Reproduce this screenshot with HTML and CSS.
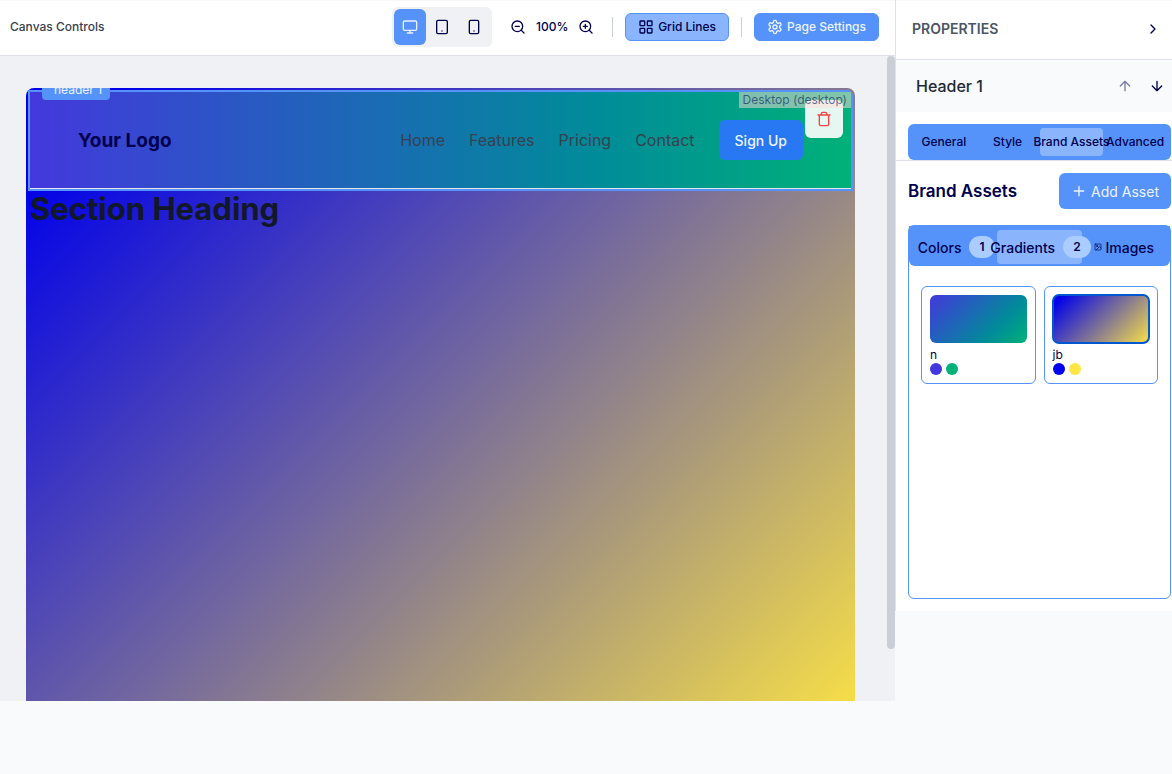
FILE: index.html
```html
<!DOCTYPE html>
<html lang="en">
<head>
<meta charset="utf-8">
<title>Page Builder</title>
<meta name="viewport" content="width=device-width, initial-scale=1">
<link rel="stylesheet" href="styles.css">
</head>
<body>
<div class="app">
  <main class="workspace">
    <header class="toolbar">
      <span class="toolbar-title">Canvas Controls</span>
      <div class="toolbar-controls">
        <div class="devices">
          <button class="device active" aria-label="Desktop"><svg class="icon" viewBox="0 0 24 24"><rect x="2" y="3" width="20" height="14" rx="2"/><path d="M8 21h8M12 17v4"/></svg></button>
          <button class="device" aria-label="Tablet"><svg class="icon" viewBox="0 0 24 24"><rect x="4" y="2" width="16" height="20" rx="2"/><path d="M12 18h.01"/></svg></button>
          <button class="device" aria-label="Mobile"><svg class="icon" viewBox="0 0 24 24"><rect x="5" y="2" width="14" height="20" rx="2"/><path d="M12 18h.01"/></svg></button>
        </div>
        <div class="zoom">
          <button class="icon-button" aria-label="Zoom out"><svg class="icon" viewBox="0 0 24 24"><circle cx="11" cy="11" r="8"/><path d="m21 21-4.35-4.35M8 11h6"/></svg></button>
          <span class="zoom-value">100%</span>
          <button class="icon-button" aria-label="Zoom in"><svg class="icon" viewBox="0 0 24 24"><circle cx="11" cy="11" r="8"/><path d="m21 21-4.35-4.35M11 8v6M8 11h6"/></svg></button>
        </div>
        <span class="divider"></span>
        <button class="tool-button grid-lines"><svg class="icon" viewBox="0 0 24 24"><rect x="3" y="3" width="7" height="7" rx="1"/><rect x="14" y="3" width="7" height="7" rx="1"/><rect x="14" y="14" width="7" height="7" rx="1"/><rect x="3" y="14" width="7" height="7" rx="1"/></svg>Grid Lines</button>
        <span class="divider"></span>
        <button class="tool-button settings"><svg class="icon" viewBox="0 0 24 24"><path d="M12.22 2h-.44a2 2 0 0 0-2 2v.18a2 2 0 0 1-1 1.73l-.43.25a2 2 0 0 1-2 0l-.15-.08a2 2 0 0 0-2.73.73l-.22.38a2 2 0 0 0 .73 2.73l.15.1a2 2 0 0 1 1 1.72v.51a2 2 0 0 1-1 1.74l-.15.09a2 2 0 0 0-.73 2.73l.22.38a2 2 0 0 0 2.73.73l.15-.08a2 2 0 0 1 2 0l.43.25a2 2 0 0 1 1 1.73V20a2 2 0 0 0 2 2h.44a2 2 0 0 0 2-2v-.18a2 2 0 0 1 1-1.73l.43-.25a2 2 0 0 1 2 0l.15.08a2 2 0 0 0 2.73-.73l.22-.39a2 2 0 0 0-.73-2.73l-.15-.08a2 2 0 0 1-1-1.74v-.5a2 2 0 0 1 1-1.74l.15-.09a2 2 0 0 0 .73-2.73l-.22-.38a2 2 0 0 0-2.73-.73l-.15.08a2 2 0 0 1-2 0l-.43-.25a2 2 0 0 1-1-1.73V4a2 2 0 0 0-2-2z"/><circle cx="12" cy="12" r="3"/></svg>Page Settings</button>
      </div>
    </header>
    <div class="stage">
      <div class="canvas">
        <div class="block">
          <span class="block-tag">header 1</span>
          <div class="site-header">
            <span class="logo">Your Logo</span>
            <nav class="site-nav">
              <a href="#">Home</a>
              <a href="#">Features</a>
              <a href="#">Pricing</a>
              <a href="#">Contact</a>
              <button class="signup">Sign Up</button>
            </nav>
          </div>
          <button class="delete" aria-label="Delete block"><svg class="icon" viewBox="0 0 24 24"><path d="M3 6h18M19 6v14a2 2 0 0 1-2 2H7a2 2 0 0 1-2-2V6M8 6V4a2 2 0 0 1 2-2h4a2 2 0 0 1 2 2v2"/></svg></button>
          <span class="viewport-tag">Desktop (desktop)</span>
        </div>
        <h1 class="section-heading">Section Heading</h1>
      </div>
      <div class="scroll-thumb"></div>
    </div>
  </main>
  <aside class="panel">
    <header class="panel-header">
      <h2 class="panel-title">PROPERTIES</h2>
      <button class="icon-button" aria-label="Collapse panel"><svg class="icon" viewBox="0 0 24 24"><path d="m9 18 6-6-6-6"/></svg></button>
    </header>
    <div class="selection">
      <h3 class="selection-name">Header 1</h3>
      <div class="move">
        <button class="icon-button" disabled aria-label="Move up"><svg class="icon" viewBox="0 0 24 24"><path d="m5 12 7-7 7 7M12 19V5"/></svg></button>
        <button class="icon-button" aria-label="Move down"><svg class="icon" viewBox="0 0 24 24"><path d="M12 5v14M19 12l-7 7-7-7"/></svg></button>
      </div>
    </div>
    <div class="tabs-wrap">
      <div class="tabs">
        <button class="tab">General</button>
        <button class="tab">Style</button>
        <button class="tab active">Brand Assets</button>
        <button class="tab">Advanced</button>
      </div>
    </div>
    <section class="assets">
      <div class="assets-head">
        <h3 class="assets-title">Brand Assets</h3>
        <button class="add"><svg class="icon" viewBox="0 0 24 24"><path d="M5 12h14M12 5v14"/></svg>Add Asset</button>
      </div>
      <div class="library">
        <div class="kinds">
          <button class="kind counted">Colors<span class="count">1</span></button>
          <button class="kind counted active">Gradients<span class="count">2</span></button>
          <button class="kind"><svg class="icon mini" viewBox="0 0 24 24"><rect x="3" y="3" width="18" height="18" rx="2"/><circle cx="9" cy="9" r="2"/><path d="m21 15-3.09-3.09a2 2 0 0 0-2.82 0L6 21"/></svg>Images</button>
        </div>
        <div class="cards">
          <article class="card">
            <div class="swatch teal"></div>
            <span class="card-name">n</span>
            <div class="dots"><i class="dot violet"></i><i class="dot green"></i></div>
          </article>
          <article class="card">
            <div class="swatch sun selected"></div>
            <span class="card-name">jb</span>
            <div class="dots"><i class="dot blue"></i><i class="dot yellow"></i></div>
          </article>
        </div>
      </div>
    </section>
  </aside>
</div>
</body>
</html>
```
FILE: styles.css
```css
* { box-sizing: border-box; }

body {
  margin: 0;
  background: #f8fafc;
  color: #00004d;
  font-family: Inter, "Liberation Sans", sans-serif;
  font-size: 14px;
}

h1, h2, h3 { margin: 0; }

button {
  border: 0;
  padding: 0;
  background: none;
  color: inherit;
  font: inherit;
  white-space: nowrap;
}

.app { display: flex; align-items: flex-start; }

.workspace {
  flex: 1;
  min-width: 0;
  height: calc(100vh - 73px);
  display: flex;
  flex-direction: column;
}

.icon {
  width: 16px;
  height: 16px;
  flex: none;
  display: block;
  fill: none;
  stroke: currentColor;
  stroke-width: 2;
  stroke-linecap: round;
  stroke-linejoin: round;
}

.toolbar {
  flex: none;
  height: 56px;
  padding: 0 16px 2px 10px;
  display: flex;
  align-items: center;
  justify-content: space-between;
  background: #fff;
  border-bottom: 1px solid #dfe2e8;
  box-shadow: inset 0 1px #f8f8f8;
  font-size: 12px;
  font-weight: 500;
}

.toolbar-title { color: #374151; }
.toolbar-controls { display: flex; align-items: center; gap: 12px; }

.devices {
  display: flex;
  padding: 2px;
  border-radius: 6px;
  background: #f0f1f4;
}

.device {
  width: 32px;
  height: 36px;
  display: grid;
  place-items: center;
  border-radius: 6px;
}

.device.active { background: #5593fb; color: #e9f1ff; }

.icon-button { width: 28px; height: 28px; display: grid; place-items: center; }
.icon-button:disabled { opacity: 0.5; }

.zoom { display: flex; align-items: center; }
.zoom-value { width: 40px; text-align: center; }
.divider { width: 1px; height: 20px; background: #cbd0d8; }

.tool-button {
  height: 28px;
  padding: 0 12px;
  display: flex;
  align-items: center;
  gap: 4px;
  border: 1px solid #5593fb;
  border-radius: 6px;
}

.grid-lines { background: #8ab5fd; }
.settings { background: #5593fb; color: #edf4ff; }

.stage {
  position: relative;
  flex: 1;
  min-height: 0;
  overflow: hidden;
  padding: 32px 40px 0 26px;
  background: #f0f1f4;
}

.canvas {
  height: 637px;
  padding: 2px;
  overflow: hidden;
  border-radius: 8px;
  background: linear-gradient(135deg, #0000ea 6%, #ffe642 102%);
}

.block {
  position: relative;
  border: 2px solid #5593fb;
  border-radius: 0 6px 0 0;
}

.site-header {
  padding: 28px 48px;
  display: flex;
  align-items: center;
  justify-content: space-between;
  border-bottom: 1px solid #e5e7eb;
  background: linear-gradient(90deg, #4338dd, #008c99 69%, #00b178);
}

.logo { font-size: 19px; font-weight: 700; }

.site-nav {
  display: flex;
  align-items: center;
  gap: 24px;
  font-size: 16px;
}

.site-nav a { color: #374151; text-decoration: none; }

.signup {
  height: 40px;
  padding: 0 16px;
  border-radius: 6px;
  background: #2878f3;
  color: #edf5ff;
  font-size: 14px;
  font-weight: 500;
}

.block-tag {
  position: absolute;
  top: -12px;
  left: 12px;
  padding: 2px 8px 2px 12px;
  border-radius: 4px;
  background: #5593fb;
  color: #edf4ff;
  font-size: 12px;
  line-height: 16px;
}

.viewport-tag {
  position: absolute;
  top: 0;
  right: 0;
  padding: 0 4px;
  background: rgba(255, 219, 215, 0.5);
  color: rgba(0, 20, 90, 0.6);
  font-size: 12px;
  line-height: 16px;
}

.delete {
  position: absolute;
  top: 8px;
  right: 8px;
  width: 38px;
  height: 38px;
  display: grid;
  place-items: center;
  border-radius: 6px;
  background: rgba(255, 255, 255, 0.9);
  color: #ef4444;
}

.section-heading {
  padding: 0 2px;
  color: #111827;
  font-size: 31px;
  font-weight: 700;
  line-height: 36px;
}

.scroll-thumb {
  position: absolute;
  top: 0;
  right: 0;
  width: 8px;
  height: 92%;
  border-radius: 4px;
  background: #cacfd7;
}

.panel {
  width: 277px;
  flex: none;
  border-left: 1px solid #dfe2e8;
  background: #fff;
}

.panel-header {
  height: 60px;
  padding: 0 5px 2px 16px;
  display: flex;
  align-items: center;
  justify-content: space-between;
  border-bottom: 1px solid #dfe2e8;
  box-shadow: inset 0 1px #f8f8f8;
}

.panel-title { color: #4b5563; font-size: 14px; font-weight: 600; }

.selection {
  height: 52px;
  padding: 0 1px 0 20px;
  display: flex;
  align-items: center;
  justify-content: space-between;
  background: #f8fafc;
}

.selection-name { color: #1f2937; font-size: 16px; font-weight: 500; }
.move { display: flex; gap: 4px; }

.tabs-wrap { padding: 12px 1px 0 12px; border-bottom: 1px solid #dfe0ec; }

.tabs {
  height: 36px;
  padding: 4px;
  display: grid;
  grid-template-columns: repeat(4, minmax(0, 1fr));
  border-radius: 6px;
  background: #5593fb;
}

.tab {
  display: flex;
  align-items: center;
  justify-content: center;
  padding-bottom: 2px;
  border-radius: 4px;
  font-size: 12px;
  font-weight: 500;
}

.tab.active, .kind.active { background: #8ab5fd; }

.assets { padding: 12px 1px 12px 12px; }

.assets-head {
  display: flex;
  align-items: center;
  justify-content: space-between;
  margin-bottom: 16px;
}

.assets-title { font-size: 17px; font-weight: 600; }

.add {
  height: 36px;
  padding: 0 12px;
  display: flex;
  align-items: center;
  gap: 4px;
  border-radius: 6px;
  background: #5593fb;
  color: #edf4ff;
}

.library {
  min-height: 374px;
  border: 1px solid #5593fb;
  border-radius: 6px;
}

.kinds {
  height: 40px;
  padding: 4px 4px 2px;
  display: grid;
  grid-template-columns: repeat(3, minmax(0, 1fr));
  border-radius: 0 0 6px 6px;
  background: #5593fb;
}

.kind {
  display: flex;
  align-items: center;
  justify-content: center;
  border-radius: 4px;
  font-weight: 500;
}

.counted { padding-left: 2px; }

.count {
  margin-left: 8px;
  padding: 0 10px;
  border-radius: 11px;
  background: #aaccff;
  font-size: 12px;
  font-weight: 600;
  line-height: 22px;
}

.mini { width: 8px; height: 8px; margin-right: 4px; }

.cards {
  padding: 20px 12px;
  display: grid;
  grid-template-columns: repeat(2, minmax(0, 1fr));
  gap: 8px;
}

.card {
  padding: 8px;
  border: 1px solid #5593fb;
  border-radius: 6px;
}

.swatch { height: 48px; border-radius: 6px; }
.teal { background: linear-gradient(135deg, #4338dd, #008c99 69%, #00b178); }
.sun { background: linear-gradient(135deg, #0000ea 6%, #ffe642 102%); }
.selected { outline: 2px solid #0058d0; outline-offset: -1px; }

.card-name {
  display: block;
  margin-top: 4px;
  font-size: 12px;
  line-height: 16px;
}

.dots { display: flex; gap: 4px; }
.dot { width: 12px; height: 12px; border-radius: 50%; }
.violet { background: #4338dd; }
.green { background: #00b178; }
.blue { background: #0000ee; }
.yellow { background: #ffe642; }
```
